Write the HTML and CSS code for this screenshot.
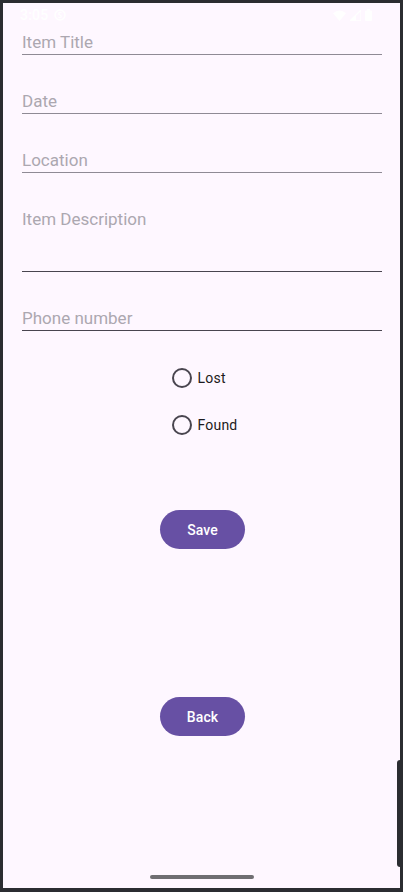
FILE: index.html
```html
<!DOCTYPE html>
<html>
<head>
<meta charset="utf-8">
<link rel="stylesheet" href="styles.css">
</head>
<body>
<div class="device">
  <div class="screen">
    <div class="status">
      <div class="status-left">
        <span class="time">3:05</span>
        <svg class="ic-note" width="12" height="12" viewBox="0 0 12 12"><circle cx="6" cy="6" r="5" fill="none" stroke="#fff" stroke-width="1.5"/><path d="M7.5 3.8 Q6 3 4.8 4 Q4.5 5.5 6 6 Q7.6 6.6 7.2 8 Q6 9 4.4 8.2" fill="none" stroke="#fff" stroke-width="1.2"/></svg>
      </div>
      <div class="status-right">
        <svg width="13" height="11" viewBox="0 0 13 11"><path d="M0 3.2 Q6.5 -2 13 3.2 L6.5 11 Z" fill="#fff"/></svg>
        <svg width="11" height="11" viewBox="0 0 11 11"><path d="M11 0 L11 11 L0 11 Z" fill="none" stroke="#fff" stroke-width="1.3"/><path d="M6 5 L6 11 L0 11 Z" fill="#fff"/></svg>
        <svg width="7" height="12" viewBox="0 0 7 12"><rect x="2" y="0" width="3" height="2" fill="#fff"/><rect x="0" y="1.5" width="7" height="10.5" rx="1" fill="#fff"/></svg>
      </div>
    </div>

    <div class="field light first">Item Title</div>
    <div class="field light">Date</div>
    <div class="field light">Location</div>
    <div class="field dark multi">Item Description</div>
    <div class="field dark">Phone number</div>

    <div class="radios">
      <label class="radio"><span class="ring"></span><span class="rlabel">Lost</span></label>
      <label class="radio"><span class="ring"></span><span class="rlabel">Found</span></label>
    </div>

    <button class="btn save">Save</button>
    <button class="btn back">Back</button>

    <div class="handle"></div>
  </div>
  <div class="side-key"></div>
</div>
</body>
</html>
```

FILE: styles.css
```css
* { box-sizing: border-box; }
html, body { margin: 0; padding: 0; }
body {
  width: 403px;
  height: 892px;
  overflow: hidden;
  font-family: Roboto, "Noto Sans", sans-serif;
  background: #2b2d31;
}
.device {
  position: relative;
  width: 403px;
  height: 892px;
  background: #2b2d31;
  padding: 3px 3px 4px 3px;
}
.screen {
  width: 397px;
  height: 885px;
  background: #fef7ff;
  display: flex;
  flex-direction: column;
}
.status {
  height: 24px;
  display: flex;
  align-items: center;
  justify-content: space-between;
  padding: 0 28px 0 17px;
  color: #fff;
}
.status-left { display: flex; align-items: center; gap: 6px; }
.time { font-size: 14px; font-weight: 500; letter-spacing: 0.2px; }
.status-right { display: flex; align-items: center; gap: 4px; }

.field {
  margin: 36px 18px 0 19px;
  padding-bottom: 2px;
  font-size: 17px;
  font-weight: 400;
  line-height: 20px;
  color: #aca7b0;
}
.field.first { margin-top: 5px; }
.field.light { border-bottom: 1px solid #8f8a95; }
.field.dark { border-bottom: 1px solid #49454f; }
.field.multi { height: 63px; }

.radios {
  align-self: center;
  margin: 23px 0 0 6px;
  display: flex;
  flex-direction: column;
  align-items: flex-start;
}
.radio {
  height: 47px;
  display: flex;
  align-items: center;
  gap: 6px;
}
.ring {
  width: 20px;
  height: 20px;
  border-radius: 50%;
  border: 2px solid #49454f;
}
.rlabel {
  font-size: 14px;
  color: #1d1b20;
  letter-spacing: 0.2px;
}

.btn {
  align-self: center;
  margin-left: 2px;
  width: 85px;
  height: 39px;
  border: none;
  border-radius: 20px;
  background: #6750a4;
  color: #fff;
  font-family: Roboto, "Noto Sans", sans-serif;
  font-size: 14px;
  font-weight: 500;
  letter-spacing: 0.1px;
  padding: 0;
}
.save { margin-top: 62px; }
.back { margin-top: 148px; }

.handle {
  margin: auto auto 9px auto;
  width: 104px;
  height: 4px;
  border-radius: 2px;
  background: #6f6e72;
}
.side-key {
  position: absolute;
  right: 3px;
  top: 760px;
  width: 3px;
  height: 107px;
  background: #2b2d31;
  border-radius: 3px 0 0 3px;
}
```
